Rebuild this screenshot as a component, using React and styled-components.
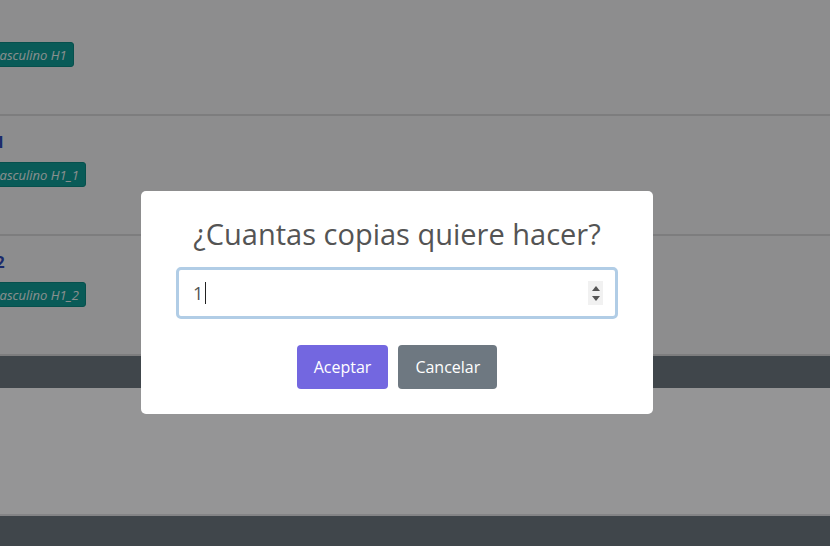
import React from 'react'
import styled, { createGlobalStyle } from 'styled-components'

const GlobalStyle = createGlobalStyle`
  html, body {
    margin: 0;
    padding: 0;
    height: 100%;
    overflow: hidden;
  }
  body {
    font-family: "Open Sans", "Noto Sans", sans-serif;
    background: #f8f8fa;
  }
`

const groups = [
    { name: 'Lote H1', tag: 'Uniforme masculino H1' },
    { name: 'Lote H1_1', tag: 'Uniforme masculino H1_1' },
    { name: 'Lote H1_2', tag: 'Uniforme masculino H1_2' },
]

function App() {
    return (
        <>
            <GlobalStyle />
            <Page>
                <List>
                    {groups.map(g => (
                        <Row key={g.name}>
                            <Entry>
                                <GroupName>{g.name}</GroupName>
                                <Tag>{g.tag}</Tag>
                            </Entry>
                        </Row>
                    ))}
                </List>
                <Bar />
                <Panel />
                <Bar />
            </Page>

            <Backdrop>
                <Dialog>
                    <Title>¿Cuantas copias quiere hacer?</Title>
                    <Field>
                        <Value>1</Value>
                        <Caret />
                        <Spinner>
                            <Arrow $up />
                            <Arrow />
                        </Spinner>
                    </Field>
                    <Actions>
                        <Button $bg="#7367e0">Aceptar</Button>
                        <Button $bg="#6e7881">Cancelar</Button>
                    </Actions>
                </Dialog>
            </Backdrop>
        </>
    )
}

const Page = styled.div`
height: 546px;
overflow: hidden;
display: flex;
flex-direction: column;
`
const List = styled.div`
margin-top: -4px;
`
const Row = styled.div`
box-sizing: border-box;
height: 120px;
padding-top: 16px;
background: #ebebed;
border-bottom: 2px solid #d0d0d3;
`
const Entry = styled.div`
margin-left: -76px;
display: flex;
flex-direction: column;
align-items: flex-start;
`
const GroupName = styled.a`
padding-left: 4px;
font-size: 16px;
line-height: 20px;
font-weight: 700;
color: #2d46b2;
`
const Tag = styled.span`
margin-top: 10px;
height: 25px;
box-sizing: border-box;
display: flex;
align-items: center;
padding: 0 6px;
font-size: 13px;
font-style: italic;
color: #e4eeee;
background: #0f9893;
border: 1px solid #0b8580;
border-radius: 3px;
`
const Bar = styled.div`
height: 32px;
flex-shrink: 0;
background: #6c757d;
`
const Panel = styled.div`
height: 126px;
flex-shrink: 0;
background: #f8f8fa;
border-bottom: 2px solid #dcdce0;
`

const Backdrop = styled.div`
position: fixed;
inset: 0;
background: rgba(0, 0, 0, 0.4);
display: flex;
justify-content: center;
align-items: flex-start;
padding: 191px 36px 0 0;
`
const Dialog = styled.div`
width: 512px;
box-sizing: border-box;
padding-bottom: 25px;
background: #fff;
border-radius: 5px;
display: flex;
flex-direction: column;
align-items: center;
`
const Title = styled.h2`
margin: 0;
padding-top: 22px;
font-size: 29px;
line-height: 41px;
font-weight: 400;
color: #545454;
`
const Field = styled.div`
align-self: stretch;
margin: 13px 35px 0;
height: 52px;
box-sizing: border-box;
display: flex;
align-items: center;
padding: 0 12px 0 14px;
border: 3px solid #b1cde6;
border-radius: 5px;
`
const Value = styled.span`
font-size: 18px;
color: #545454;
`
const Caret = styled.span`
width: 1px;
height: 22px;
margin-left: 2px;
background: #222;
`
const Spinner = styled.div`
margin-left: auto;
width: 15px;
height: 24px;
background: #f1f1f1;
display: flex;
flex-direction: column;
align-items: center;
justify-content: center;
gap: 5px;
`
const Arrow = styled.span`
width: 0;
height: 0;
border-left: 4px solid transparent;
border-right: 4px solid transparent;
${p => p.$up ? 'border-bottom: 5px solid #555;' : 'border-top: 5px solid #555;'}
`
const Actions = styled.div`
display: flex;
gap: 10px;
margin-top: 26px;
`
const Button = styled.button`
height: 44px;
padding: 0 17px;
border: none;
border-radius: 4px;
background: ${p => p.$bg};
color: #fff;
font-family: inherit;
font-size: 16px;
`

export default App
